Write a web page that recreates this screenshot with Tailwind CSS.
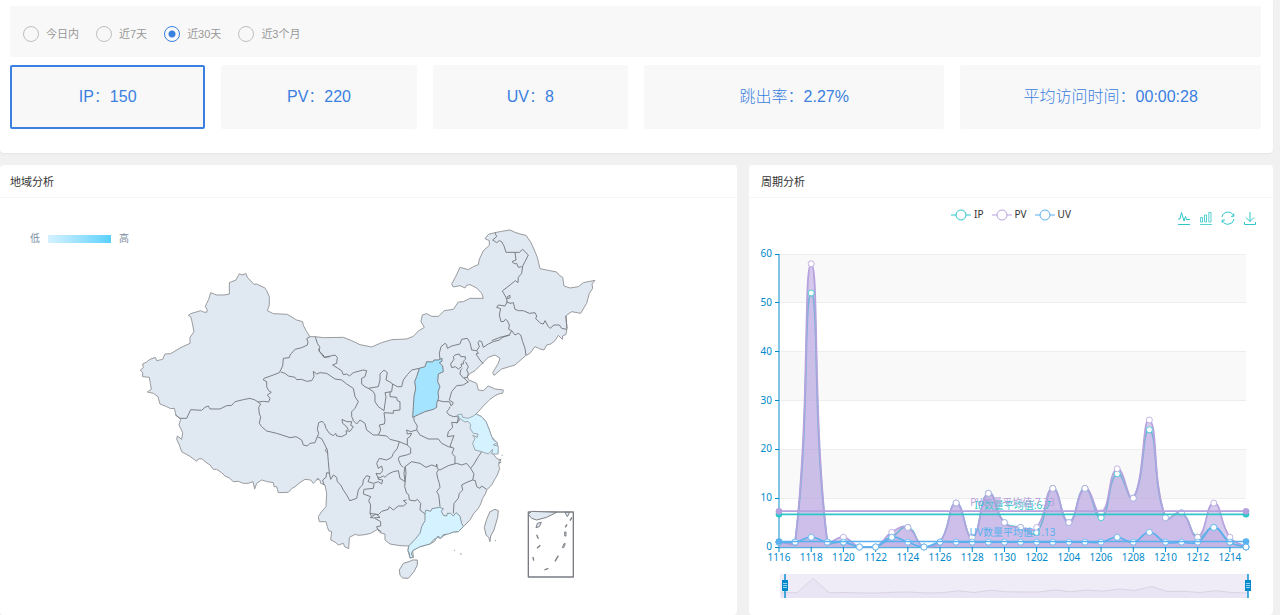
<!DOCTYPE html>
<html lang="zh-CN">
<head>
    <meta charset="UTF-8">
    <meta name="viewport" content="width=device-width, initial-scale=1.0">
    <title>访问统计</title>
    <script src="https://cdn.jsdelivr.net/npm/@tailwindcss/browser@4"></script>
</head>
<body class="bg-[#f1f1f1] min-h-screen overflow-x-hidden font-['Liberation_Sans','Noto_Sans_CJK_SC',sans-serif] text-[11px] text-[#333]">
    <main class="pr-[7px]">
        <!-- Summary -->
        <section class="bg-white rounded-b-sm shadow-xs pt-[6px] pb-6 pl-[10px] pr-3">
            <form class="bg-[#f8f8f8] h-[51px] px-[13px] pt-1 flex items-center gap-[17px] text-[#999]">
                <label class="flex items-center gap-[7px]">
                    <input type="radio" name="range" class="appearance-none size-4 rounded-full border border-[#bfbfbf] checked:border-[#3a80e0] checked:bg-[radial-gradient(circle,#3a80e0_3px,transparent_4px)]"><span class="pt-px">今日内</span>
                </label>
                <label class="flex items-center gap-[7px]">
                    <input type="radio" name="range" class="appearance-none size-4 rounded-full border border-[#bfbfbf] checked:border-[#3a80e0] checked:bg-[radial-gradient(circle,#3a80e0_3px,transparent_4px)]"><span class="pt-px">近7天</span>
                </label>
                <label class="flex items-center gap-[7px]">
                    <input type="radio" name="range" checked class="appearance-none size-4 rounded-full border border-[#bfbfbf] checked:border-[#3a80e0] checked:bg-[radial-gradient(circle,#3a80e0_3px,transparent_4px)]"><span class="pt-px">近30天</span>
                </label>
                <label class="flex items-center gap-[7px]">
                    <input type="radio" name="range" class="appearance-none size-4 rounded-full border border-[#bfbfbf] checked:border-[#3a80e0] checked:bg-[radial-gradient(circle,#3a80e0_3px,transparent_4px)]"><span class="pt-px">近3个月</span>
                </label>
            </form>
            <div class="mt-2 grid grid-cols-[13fr_13fr_13fr_20fr_20fr] gap-4 text-base font-light text-[#3a80e0]">
                <button type="button" class="h-16 rounded-xs bg-[#f8f8f8] border-2 border-[#3a80e0]">IP：150</button>
                <button type="button" class="h-16 rounded-xs bg-[#f8f8f8]">PV：220</button>
                <button type="button" class="h-16 rounded-xs bg-[#f8f8f8]">UV：8</button>
                <button type="button" class="h-16 rounded-xs bg-[#f8f8f8]">跳出率：2.27%</button>
                <button type="button" class="h-16 rounded-xs bg-[#f8f8f8]">平均访问时间：00:00:28</button>
            </div>
        </section>

        <div class="mt-3 grid grid-cols-[737fr_524fr] gap-3">
            <!-- Region map -->
            <section class="bg-white rounded-sm relative">
                <h2 class="h-[33px] px-[10px] pt-[2px] flex items-center border-b border-[#f6f6f6]">地域分析</h2>
                <div class="absolute left-[30px] top-[66px] flex items-center gap-2 text-[10px] text-[#7b8ea3]">
                    <span>低</span>
                    <span class="w-[63px] h-2 bg-linear-to-r from-[#d4f2ff] to-[#55d0ff]"></span>
                    <span>高</span>
                </div>
                <svg class="w-full block" viewBox="0 198 737 417">
                    <g transform="translate(130 220) scale(.33333)" fill="none" stroke="#787c82" stroke-width="2.900" stroke-linejoin="round">
                        <!-- mainland -->
                        <path fill="#e0e8f2" stroke="#95979a" d="M31 450L40 443 38 432 50 426 60 418 76 412 80 422 98 418 105 402 122 401 150 384 180 370 180 352 192 335 186 305 182 290 175 286 182 281 212 272 220 276 230 277 232 270 226 260 230 250 236 238 242 218 260 225 282 225 298 222 298 188 318 180 328 161 336 165 348 161 352 172 372 193 380 192 396 200 404 203 410 212 418 230 418 255 412 272 430 281 472 283 500 300 518 305 520 316 530 335 540 350 556 350 580 353 640 352 665 362 690 374 725 381 755 368 785 359 830 357 850 349 865 333 883 322 873 305 877 285 890 281 905 289 925 289 943 272 970 268 985 246 1000 245 1020 235 1060 235 1055 220 1040 204 1020 194 1010 196 1005 204 990 197 970 201 965 192 978 168 990 142 1015 149 1030 140 1045 134 1048 118 1060 92 1078 76 1078 62 1065 56 1075 43 1095 38 1115 34 1140 30 1155 37 1170 42 1188 46 1202 66 1213 90 1222 112 1230 146 1250 150 1280 156 1288 166 1298 172 1302 198 1320 204 1345 200 1360 188 1395 181 1386 192 1388 205 1378 220 1370 250 1352 280 1325 275 1307 288 1311 325 1308 343 1298 348 1297 358 1285 346 1275 362 1262 372 1250 375 1242 390 1228 386 1215 380 1200 400 1188 406 1155 435 1115 447 1092 466 1088 458 1105 430 1110 415 1095 405 1075 412 1055 432 1035 452 1018 462 1012 470 1016 480 1040 490 1045 510 1060 512 1075 498 1095 507 1120 510 1118 520 1108 521 1095 527 1080 538 1060 558 1045 575 1038 582 1055 590 1068 605 1078 630 1085 650 1102 670 1104 700 1087 698 1100 715 1112 720 1106 735 1109 745 1102 765 1096 775 1085 795 1070 810 1066 822 1058 835 1052 852 1045 865 1030 882 1020 900 1000 920 985 935 970 936 955 940 940 948 932 955 920 952 914 964 900 972 870 980 848 992 850 1012 840 1014 834 992 836 978 810 977 780 972 765 960 765 942 750 938 743 928 722 940 705 944 685 946 676 943 658 952 656 986 644 980 640 970 625 975 615 966 602 960 605 935 596 932 592 920 588 905 568 905 565 890 574 876 588 860 590 820 585 795 572 790 570 780 560 778 565 775 550 790 542 780 525 778 510 788 495 800 485 806 475 817 445 818 440 800 432 800 430 788 412 785 395 780 380 790 374 807 369 785 355 790 340 790 325 784 310 785 298 774 285 768 275 758 260 748 250 748 240 735 228 727 215 716 205 717 200 724 180 709 155 695 148 675 140 658 142 648 155 658 158 638 147 615 152 598 138 585 133 565 122 566 110 560 90 552 84 530 70 520 52 516 64 508 61 490 58 472 38 470 38 458Z"/>
                        <!-- northwest borders -->
                        <path transform="translate(0 120)" d="M540 230L530 236 534 246 532 255 515 263 495 268 480 285 478 293 460 295 458 318 448 338 430 345 402 355 400 360 410 365 410 380 416 392 424 397 412 405 420 415 416 426 400 424 384 426M384 426L375 420 360 415 340 419 315 425 305 436 290 437 270 447 240 447 235 438 225 442 215 451 182 449 170 475 150 475 136 465M384 426L392 432 386 442 388 462 392 470 388 490 395 500 410 513M452 336L465 340 475 348 495 352 500 359 515 358 530 364 545 362 552 350 550 334M556 230L562 250 570 262 566 270 582 292 600 290"/>
                        <!-- Gansu, Ningxia, Shaanxi, Hebei -->
                        <path transform="translate(540)" d="M28 385L28 395 40 405 42 412 62 408 75 405 82 412 80 430 68 435 82 444 95 452 100 464 110 462 118 468 130 458 160 450 170 452 165 470 155 475 155 492 165 500 175 505 205 500 210 480 210 462 222 450 232 458 228 480 240 486 248 492 245 515 225 518 228 530 225 550 222 572 205 560 195 545 195 525 190 515 175 505M10 454L20 462 30 458 50 460 75 477 95 480 110 492 130 505 135 530 145 545 135 565 125 575 125 590 130 600M248 492L262 500 275 500 280 480 292 464 305 450 328 445M240 515L240 530 260 532 262 542 270 545 270 570 250 572 250 580 222 578 225 600M390 418L388 400 393 380 405 370 410 374 412 385 425 378 450 372 455 358 472 355 480 368 485 390 500 392 505 400 498 402 510 420 520 432M500 392L508 380 504 368 508 362 515 365 520 382 535 372 550 365 568 360 578 352 600 345M422 432L432 418 430 410 435 405 448 402 452 410 466 410 466 418 460 424 460 432 453 432 455 440 445 447 436 440 425 443ZM466 425L475 440 470 450 475 460 472 472 460 474 455 468 450 462 452 450 457 445M475 485L460 495 440 497 425 515 418 540 430 548 424 558 418 545M380 540L400 545 418 545M420 560L418 566 410 575 416 584 430 590 445 588M475 487L468 480 462 474"/>
                        <!-- northeast borders -->
                        <path transform="translate(870)" d="M225 38L230 50 218 60 230 68 238 62 245 65 252 78 258 97 285 97 298 97 308 88 325 105 315 125 308 138 305 160 295 172 294 188 286 182 270 195 247 213 258 232 262 245M285 97L288 120 276 125 285 132 290 130 295 142 305 140M262 230L270 226 270 234 262 236ZM258 245L270 250 280 248 285 268 295 272 310 272 328 280 345 278 350 288 347 296 362 310 370 312 375 302 385 320 390 325 402 315 418 315 425 325 441 328M262 245L255 258 235 255 230 262 242 266 238 285 243 305 252 304 256 298 262 302 268 315 266 328 275 332 268 345 240 352 215 362M275 332L285 345 295 340 302 345 308 365 315 385 318 406M441 325L438 288"/>
                        <!-- Tibet, Qinghai, Sichuan -->
                        <path transform="translate(120 510)" d="M290 123L320 130 345 138 360 143 378 140 395 150 400 165 412 168 420 160 435 158 442 140 455 146 465 165 472 180 475 215 478 250 482 268 490 255 500 262 502 275 512 285 520 300 530 315 540 333M442 140L446 130 442 118 446 98 456 94 464 102 468 115 478 130 490 137 497 130 500 138 515 140 530 132 528 122 540 124 550 110 542 106 545 95 530 95 516 88 518 100 530 110 535 120M470 175L466 182 474 190M480 250L470 248 468 262 458 270 462 285"/>
                        <!-- central borders -->
                        <path transform="translate(630 360)" d="M135 240L133 252 118 255 122 270 115 285 140 288 150 298 178 305 202 315 212 325 212 340 200 345 178 350 175 358 182 375 190 382M38 240L50 252 60 240 75 250 80 270 100 285 115 285M222 232L222 242 232 258 230 270 240 285 265 297 295 297 305 310 325 320 335 322M230 270L212 275 200 270 202 282 215 280 210 290 202 295 202 315M355 232L352 248 335 247 338 262 325 275 322 290 342 287 335 305 330 320 342 325 336 340 345 350 345 372M352 225L358 240 350 250M300 390L325 377 350 370 365 375 380 370 392 385 400 375 415 350 425 335M178 305L172 325 160 340 155 352 140 360 118 355 110 370 115 385 125 378 128 392 120 402 108 400 115 415 130 408 135 412 145 402 160 395 175 392 180 415 195 425 192 400 195 380 215 365 240 370 258 382 275 375 290 380 290 372 292 386 300 390"/>
                        <!-- southern borders -->
                        <path transform="translate(540 630)" d="M120 212L140 205 145 180 152 170 158 165 160 150 170 137 180 140 174 155 190 160 205 155 215 162 218 150 205 148 205 140M192 162L190 175 162 178 160 192 182 200 176 212 182 225 180 250 205 254 215 244 235 238 238 230 250 240 265 228 280 228 290 220 280 212 290 210M286 110L288 130 286 150 284 170 290 190 296 194 298 210 315 213 322 208 332 220 330 240 345 252M385 120L380 128 383 145 388 160 390 172 380 185 386 195 388 210 390 230M482 115L492 132 488 150 468 158 455 165 458 180 448 190 445 205 432 220 430 250M488 150L496 152 500 170 510 175 515 168 530 178M180 250L185 260 198 252 210 262 192 264 180 262M195 265L212 275 212 288 200 290 203 298 214 305"/>
                        <!-- Shanxi -->
                        <path transform="translate(540)" fill="#a5e4ff" d="M328 445L345 440 350 425 368 426 372 420 385 420 396 415 396 424 388 428 398 438 400 455 385 462 383 485 390 500 384 516 386 534 380 550 380 562 370 568 345 575 325 584 308 592 310 560 312 530 317 505 314 485 320 470Z"/>
                        <!-- Jiangsu -->
                        <path transform="translate(630 360)" fill="#d4f2ff" stroke="#97a5ad" d="M352 225L365 222 368 232 385 235 400 228 408 222 425 230 438 245 448 270 455 290 460 300 472 308 460 315 475 318 474 342 455 342 458 328 445 342 425 335 405 330 398 310 405 295 398 286 412 292 414 282 400 280 390 265 392 254 384 244 375 246 360 236Z"/>
                        <!-- Guangdong -->
                        <path transform="translate(540 630)" fill="#d4f2ff" stroke="#85949c" d="M345 250L348 240 362 244 366 236 388 232 400 236 394 244 400 256 410 258 412 250 422 250 430 258 438 248 450 258 455 280 460 290 445 305 430 306 415 312 400 314 392 325 384 318 380 325 372 328 360 342 330 350 308 362 304 372 310 382 300 384 298 370 294 362 296 348 315 328 330 310 335 290 345 272Z"/>
                        <!-- Hainan, Taiwan -->
                        <path transform="translate(540 630)" fill="#e0e8f2" stroke="#909296" d="M268 420L280 400 300 394 308 390 322 390 322 405 312 425 295 445 278 444 270 436ZM555 238L565 242 563 262 552 300 542 318 540 335 536 322 528 315 523 292 530 268 540 245ZM432 361h3M450 372h5M555 332h3M575 76h3M566 92l8 -5M564 99l10 -2"/>
                        <!-- South China Sea inset -->
                        <g transform="translate(930 750)">
                            <rect x="265" y="126" width="135" height="195" stroke-width="4"/>
                            <path fill="#e0e8f2" d="M265 133L275 124 350 127 320 142 290 150 275 145ZM375 127L389 127 382 140ZM292 160L304 157 298 170 288 173ZM374 186h4v12h-4ZM376 221l-4 0 -5 12 4 0Z"/>
                            <path stroke-width="4" d="M396 142l-6 10M381 163l-5 9M355 257l-10 17M325 295l-12 5M290 194l5 12M301 226l-10 9M279 261l2 11"/>
                        </g>
                    </g>
                </svg>
            </section>

            <!-- Period chart -->
            <section class="bg-white rounded-sm">
                <h2 class="h-[33px] px-3 pt-[2px] flex items-center border-b border-[#f6f6f6]">周期分析</h2>
                <div class="h-[42px] grid grid-cols-[1fr_auto_1fr] items-start px-4 text-[10px] font-['Noto_Sans','Noto_Sans_CJK_SC',sans-serif]">
                    <span></span>
                    <div class="flex gap-2 pt-2">
                        <button type="button" class="flex items-center gap-[3px]">
                            <svg class="w-5 h-4" viewBox="0 0 20 16" fill="white" stroke="#2ec7c9"><path d="M0 9h20"/><circle cx="10" cy="9" r="5"/></svg>IP
                        </button>
                        <button type="button" class="flex items-center gap-[3px]">
                            <svg class="w-5 h-4" viewBox="0 0 20 16" fill="white" stroke="#b6a2de"><path d="M0 9h20"/><circle cx="10" cy="9" r="5"/></svg>PV
                        </button>
                        <button type="button" class="flex items-center gap-[3px]">
                            <svg class="w-5 h-4" viewBox="0 0 20 16" fill="white" stroke="#5ab1ef"><path d="M0 9h20"/><circle cx="10" cy="9" r="5"/></svg>UV
                        </button>
                    </div>
                    <div class="flex gap-2 justify-end pt-[13px] text-[#2ec7c9]">
                        <button type="button" aria-label="折线图">
                            <svg class="size-[14px] block" viewBox="0 0 14 14" fill="none" stroke="currentColor"><path d="M1 8h2L4.500 1.500 7 10 8.500 5.500 9.500 8.500 13 8.500M1 13.500h12"/></svg>
                        </button>
                        <button type="button" aria-label="柱状图">
                            <svg class="size-[14px] block" viewBox="0 0 14 14" fill="none" stroke="currentColor" stroke-width=".8"><path d="M1.500 6.500h2v4.500h-2zM5.500 4h2v7h-2zM9.800 1.500h2.200v9.500h-2.200zM1 13.500h12"/></svg>
                        </button>
                        <button type="button" aria-label="还原">
                            <svg class="size-[14px] block" viewBox="0 0 14 14" fill="none" stroke="currentColor"><path d="M1 6A6 6 0 0 1 12.500 5M13 8A6 6 0 0 1 1.500 9.500M12.800 2.500V5.300H10M1.200 11.800V9H4"/></svg>
                        </button>
                        <button type="button" aria-label="保存为图片">
                            <svg class="size-[14px] block" viewBox="0 0 14 14" fill="none" stroke="currentColor"><path d="M7 1v9.500M3 6.500l4 4 4-4M1.500 11v2.500h11V11"/></svg>
                        </button>
                    </div>
                </div>
                <svg id="chart" class="w-full block text-[10px] font-['Noto_Sans','Noto_Sans_CJK_SC',sans-serif]" viewBox="0 0 524 375"></svg>
            </section>
        </div>
    </main>

    <script>
        const days = ['1116', '1117', '1118', '1119', '1120', '1121', '1122', '1123', '1124', '1125', '1126', '1127', '1128', '1129', '1130', '1201', '1202', '1203', '1204', '1205', '1206', '1207', '1208', '1209', '1210', '1211', '1212', '1213', '1214', '1215'];
        const series = [
            { name: 'IP', color: '#2ec7c9', area: '#b6a2de', opacity: 0.3, avg: 6.7, data: [1, 1, 52, 1, 1, 0, 0, 2, 4, 0, 1, 9, 2, 11, 5, 4, 3, 12, 5, 12, 6, 15, 10, 24, 6, 7, 2, 4, 1, 0] },
            { name: 'PV', color: '#b6a2de', area: '#b6a2de', opacity: 0.55, avg: 7.33, data: [1, 1, 58, 1, 2, 0, 0, 3, 4, 0, 1, 9, 2, 11, 5, 4, 4, 12, 5, 12, 7, 16, 10, 26, 6, 7, 2, 9, 2, 0] },
            { name: 'UV', color: '#5ab1ef', area: '#b6a2de', opacity: 0.3, avg: 1.13, data: [1, 1, 2, 1, 1, 0, 0, 2, 1, 0, 1, 1, 1, 1, 1, 1, 1, 1, 1, 1, 1, 2, 1, 3, 1, 1, 1, 4, 1, 0] }
        ];
        const left = 30, right = 497, top0 = 14, bottom = 307;
        const x = i => left + i * (right - left) / (days.length - 1);
        const y = v => bottom - v * (bottom - top0) / 60;
        const clamp = v => Math.max(top0, Math.min(bottom, v));

        // Bezier through all points, control points follow the neighbours
        function smoothPath(data) {
            const pts = data.map((v, i) => [x(i), y(v)]);
            const cps = pts.map((p, i) => {
                const a = pts[i - 1] || p, b = pts[i + 1] || p;
                const d0 = Math.hypot(p[0] - a[0], p[1] - a[1]), d1 = Math.hypot(b[0] - p[0], b[1] - p[1]);
                const r = d1 / (d0 + d1), vx = (b[0] - a[0]) * 0.5, vy = (b[1] - a[1]) * 0.5;
                return [p[0] - vx * (1 - r), clamp(p[1] - vy * (1 - r)), p[0] + vx * r, clamp(p[1] + vy * r)];
            });
            let d = `M${pts[0]}`;
            for (let i = 1; i < pts.length; i++) {
                d += `C${cps[i - 1][2]},${cps[i - 1][3]} ${cps[i][0]},${cps[i][1]} ${pts[i]}`;
            }
            return d;
        }

        function drawChart() {
            let svg = '';

            // Grid
            for (let v = 60; v > 0; v -= 10) {
                if (v % 20 === 0) svg += `<rect x="${left}" y="${y(v)}" width="${right - left}" height="${y(v - 10) - y(v)}" fill="#f9f9f9"/>`;
                svg += `<path d="M${left} ${Math.floor(y(v)) + 0.5}H${right}" stroke="#eee"/>`;
            }

            // Axes
            for (let v = 0; v <= 60; v += 10) {
                svg += `<path d="M${left - 4} ${Math.floor(y(v)) + 0.5}h4" stroke="#008acd"/>`;
                svg += `<text x="${left - 7}" y="${y(v) + 3}" text-anchor="end" fill="#008acd">${v}</text>`;
            }
            days.forEach((day, i) => {
                if (i % 2) return;
                svg += `<path d="M${x(i)} ${bottom}v5" stroke="#008acd"/>`;
                svg += `<text x="${x(i)}" y="321" text-anchor="middle" fill="#008acd">${day}</text>`;
            });
            svg += `<path d="M${left} ${top0}V${bottom}M${left} ${bottom + 0.5}H${right}" stroke="#008acd" stroke-opacity=".65" stroke-width="1.5"/>`;

            // Areas and lines
            series.forEach(s => {
                const d = smoothPath(s.data);
                svg += `<path d="${d}V${bottom}H${left}Z" fill="${s.area}" fill-opacity="${s.opacity}"/>`;
                svg += `<path d="${d}" fill="none" stroke="${s.color}" stroke-width="1.7"/>`;
            });
            series.forEach(s => {
                s.data.forEach((v, i) => {
                    svg += `<circle cx="${x(i)}" cy="${y(v)}" r="3" fill="white" stroke="${s.color}" stroke-opacity=".8"/>`;
                });
            });

            // Averages
            series.forEach(s => {
                svg += `<path d="M${left} ${y(s.avg)}H${right}" stroke="${s.color}" stroke-width="1.7"/>`;
                svg += `<circle cx="${left}" cy="${y(s.avg)}" r="3.3" fill="${s.color}"/><circle cx="${right}" cy="${y(s.avg)}" r="3.3" fill="${s.color}"/>`;
                svg += `<text x="${(left + right) / 2}" y="${y(s.avg) - 5}" text-anchor="middle" fill="${s.color}">${s.name}数量平均值:${s.avg}</text>`;
            });
            svg += `<circle cx="${right}" cy="${bottom}" r="3" fill="white" stroke="#5ab1ef"/>`;

            // Zoom slider
            const shadow = series[1].data.map((v, i) => `${x(i) + 2},${353 - v / 4}`).join(' ');
            svg += `<rect x="31" y="334" width="468" height="24" fill="#efebf7"/>`;
            svg += `<polygon points="32,358 ${shadow} 499,358" fill="#eae5f5"/><polyline points="${shadow}" fill="none" stroke="#d9d3e3"/>`;
            [36, 499].forEach(h => {
                svg += `<path d="M${h} 334v24" stroke="#008acd" stroke-opacity=".7" stroke-width="2"/><rect x="${h - 3}" y="340" width="6" height="11" fill="#008acd"/>`;
                svg += `<path d="M${h - 2} 343.500h4M${h - 2} 345.500h4M${h - 2} 347.500h4" stroke="#9fd4ee"/>`;
            });

            document.getElementById('chart').innerHTML = svg;
        }

        document.addEventListener('DOMContentLoaded', drawChart);
    </script>
</body>
</html>
